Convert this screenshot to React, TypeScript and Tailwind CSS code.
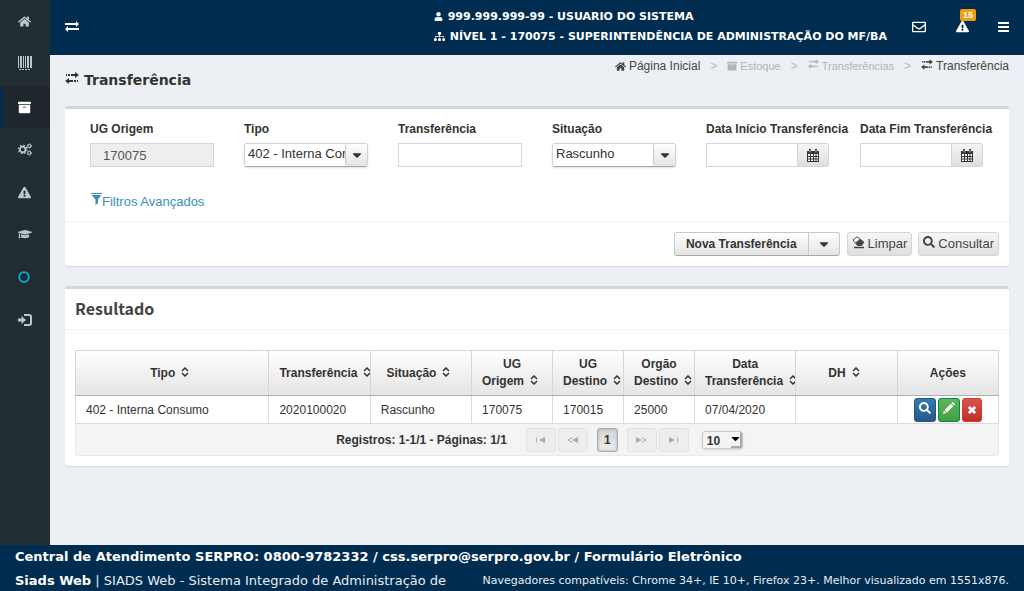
import type { ReactNode } from 'react';
import {
  FaArchive,
  FaCaretDown,
  FaExclamationTriangle,
  FaGraduationCap,
  FaHome,
  FaRegEnvelope,
  FaSearch,
  FaSitemap,
  FaUser,
} from 'react-icons/fa';

type IconProps = { className?: string };

function BarcodeIcon({ className }: IconProps) {
  return (
    <svg viewBox="0 0 14 14" className={className} fill="currentColor" aria-hidden="true">
      <path d="M0 0h1v12H0zM2 0h2v12H2zM5 0h1v12H5zM7 0h1v12H7zM9 0h2v12H9zM12 0h2v12h-2zM1 13h2v1H1zM4 13h2v1H4zM7 13h2v1H7zM10 13h2v1h-2z" />
    </svg>
  );
}

function CogsIcon({ className }: IconProps) {
  return (
    <svg viewBox="0 0 14 13" className={className} fill="none" stroke="currentColor" aria-hidden="true">
      <circle cx="4.700" cy="6.500" r="2.800" strokeWidth="1.800" />
      <circle cx="4.700" cy="6.500" r="4.200" strokeWidth="1.200" strokeDasharray="1.650 1.650" />
      <circle cx="11.300" cy="3" r="1.500" strokeWidth="1.100" />
      <circle cx="11.300" cy="3" r="2.300" strokeWidth=".8" strokeDasharray="1.200 1.200" />
      <circle cx="11.300" cy="10" r="1.500" strokeWidth="1.100" />
      <circle cx="11.300" cy="10" r="2.300" strokeWidth=".8" strokeDasharray="1.200 1.200" />
    </svg>
  );
}

function LoginIcon({ className }: IconProps) {
  return (
    <svg viewBox="0 0 14 12" className={className} fill="none" aria-hidden="true">
      <path d="M6 1h5q2 0 2 2v6q0 2-2 2H6" stroke="currentColor" strokeWidth="2" />
      <path d="M0 4.500h3.500V2L8 6 3.500 10V7.500H0z" fill="currentColor" />
    </svg>
  );
}

function SwapIcon({ className }: IconProps) {
  return (
    <svg viewBox="0 0 14 11" className={className} fill="currentColor" aria-hidden="true">
      <path d="M0 2h11V0l3 3-3 3V4H0zM14 7H3V5L0 8l3 3V9h11z" />
    </svg>
  );
}

function BarsIcon({ className }: IconProps) {
  return (
    <svg viewBox="0 0 11 10" className={className} fill="currentColor" aria-hidden="true">
      <path d="M0 0h11v2H0zM0 4h11v2H0zM0 8h11v2H0z" />
    </svg>
  );
}

function TransferIcon({ className }: IconProps) {
  return (
    <svg viewBox="0 0 14 12" className={className} fill="currentColor" aria-hidden="true">
      <path d="M1 2h1v2H1zM3 2h2v2H3zM6 2h4V0l4 3-4 3V4H6zM13 8h-1v2h1zM11 8H9v2h2zM8 8H4V6L0 9l4 3v-2h4z" />
    </svg>
  );
}

function FilterIcon({ className }: IconProps) {
  return (
    <svg viewBox="0 0 11 12" className={className} fill="currentColor" aria-hidden="true">
      <path d="M0 0h11v1H0zM.5 2h10L7 6.500V10l-2.500 2V6.500z" />
    </svg>
  );
}

function CalendarIcon({ className }: IconProps) {
  return (
    <svg viewBox="0 0 12 13" className={className} aria-hidden="true">
      <path d="M0 2h12v11H0z" fill="currentColor" />
      <path d="M1 5h2v2H1zM4 5h2v2H4zM7 5h1.500v2H7zM9.500 5H11v2H9.500zM1 8h2v1.500H1zM4 8h2v1.500H4zM7 8h1.500v1.500H7zM9.500 8H11v1.500H9.500zM1 10.500h2V12H1zM4 10.500h2V12H4zM7 10.500h1.500V12H7zM9.500 10.500H11V12H9.500z" fill="white" />
      <path d="M2 0h2v4H2zM8 0h2v4H8z" fill="currentColor" />
      <path d="M3 1v2.500M9 1v2.500" stroke="white" strokeWidth=".7" />
    </svg>
  );
}

function EraserIcon({ className }: IconProps) {
  return (
    <svg viewBox="0 0 13 13" className={className} aria-hidden="true">
      <path d="M1 4 5 .8 11.800 6 9 9.500H5.500z" fill="white" stroke="currentColor" />
      <path d="M3.500 6.500 8 3l4.200 3.500L9.500 10H6z" fill="currentColor" />
      <path d="M2 11.500h10" stroke="currentColor" strokeWidth="1.500" />
    </svg>
  );
}

function PencilIcon({ className }: IconProps) {
  return (
    <svg viewBox="0 0 13 13" className={className} fill="currentColor" aria-hidden="true">
      <path d="M0 13l1-3.500L3.500 12zM1.700 8.700 8.500 2 11 4.500 4.300 11.300zM9.300 1.300 10.500 0 13 2.500l-1.300 1.300z" />
    </svg>
  );
}

function RemoveIcon({ className }: IconProps) {
  return (
    <svg viewBox="0 0 9 9" className={className} fill="none" stroke="currentColor" strokeWidth="3" aria-hidden="true">
      <path d="M1 1l7 7M8 1 1 8" />
    </svg>
  );
}

function SortIcon() {
  return (
    <svg viewBox="0 0 8 10" className="mr-[5px] ml-[6px] inline-block h-[10px] w-2 align-baseline" fill="none" stroke="currentColor" strokeWidth="1.500" aria-hidden="true">
      <path d="M1 4l3-3 3 3M1 6l3 3 3-3" />
    </svg>
  );
}

function PagerIcon({ kind }: { kind: 'first' | 'prev' | 'next' | 'last' }) {
  const flipped = kind === 'next' || kind === 'last';
  const end = kind === 'first' || kind === 'last';
  return (
    <svg viewBox="0 0 11 6" className={flipped ? 'h-[6px] w-[11px] rotate-180' : 'h-[6px] w-[11px]'} aria-hidden="true">
      <path d={end ? 'M10 0v6L4 3z' : 'M11 0v6L5 3z'} fill="currentColor" />
      <path d={end ? 'M1.500 .5v5' : 'M5.500 .5 1 3l4.500 2.500'} fill="none" stroke="currentColor" />
    </svg>
  );
}

const menu = [
  { label: 'Início', size: 'h-[43px]', icon: <FaHome className="size-[13px]" /> },
  { label: 'Código de barras', size: 'h-[43px] pb-[3px]', icon: <BarcodeIcon className="size-[14px]" /> },
  { label: 'Estoque', size: 'h-[42px]', active: true, icon: <FaArchive className="size-[13px]" /> },
  { label: 'Configurações', size: 'h-[43px]', icon: <CogsIcon className="h-[13px] w-[14px]" /> },
  { label: 'Alertas', size: 'h-[42px]', icon: <FaExclamationTriangle className="size-[13px]" /> },
  { label: 'Treinamento', size: 'h-[42px]', icon: <FaGraduationCap className="size-[14px]" /> },
  {
    label: 'Status',
    size: 'h-[44px]',
    icon: (
      <svg viewBox="0 0 12 12" className="size-[12px] text-[#00b4e8]" aria-hidden="true">
        <circle cx="6" cy="6" r="4.800" fill="none" stroke="currentColor" strokeWidth="1.800" />
      </svg>
    ),
  },
  { label: 'Sair', size: 'h-[42px]', icon: <LoginIcon className="h-3 w-[14px]" /> },
];

function Sidebar() {
  return (
    <nav className="w-[50px] shrink-0 bg-[#222d32] text-[#b8c7ce]">
      {menu.map((m) => (
        <a
          key={m.label}
          href="#"
          aria-label={m.label}
          className={`flex items-center border-l-[3px] pl-[15px] ${m.size} ${
            m.active ? 'border-[#002c50] bg-[#1e282c] text-white' : 'border-transparent'
          }`}
        >
          {m.icon}
        </a>
      ))}
    </nav>
  );
}

function Header() {
  return (
    <header className="flex h-[55px] items-center bg-[#002c50] px-[15px] pb-[2px] text-white">
      <button aria-label="Alternar menu">
        <SwapIcon className="h-[11px] w-[14px]" />
      </button>
      <div className="ml-auto font-['DejaVu_Sans',sans-serif] text-[11px] leading-5 font-bold whitespace-nowrap">
        <p className="flex items-center gap-[5px]">
          <FaUser className="size-[9px]" />
          999.999.999-99 - USUARIO DO SISTEMA
        </p>
        <p className="flex items-center gap-[5px]">
          <FaSitemap className="size-[11px]" />
          NÍVEL 1 - 170075 - SUPERINTENDÊNCIA DE ADMINISTRAÇÃO DO MF/BA
        </p>
      </div>
      <button aria-label="Mensagens" className="ml-[25px]">
        <FaRegEnvelope className="size-[14px]" />
      </button>
      <button aria-label="Alertas" className="relative ml-[30px]">
        <FaExclamationTriangle className="size-[13px]" />
        <span className="absolute -top-[11px] left-1 rounded-[2px] bg-[#f39c12] px-[3px] text-[9px] leading-3 font-bold">15</span>
      </button>
      <button aria-label="Menu" className="ml-[29px]">
        <BarsIcon className="h-[10px] w-[11px]" />
      </button>
    </header>
  );
}

function Breadcrumb() {
  const sep = <span className="text-[#b8b8b8]">&gt;</span>;
  return (
    <nav aria-label="Trilha" className="flex items-center gap-[10px] text-[12px] leading-[22px] text-[#444]">
      <a href="#" className="flex items-center gap-[3px]">
        <FaHome className="size-[11px]" />
        Página Inicial
      </a>
      {sep}
      <span className="flex items-center gap-[3px] text-[11px] text-[#b3b3b3]">
        <FaArchive className="size-[10px]" />
        Estoque
      </span>
      {sep}
      <span className="flex items-center gap-[3px] text-[11px] text-[#b3b3b3]">
        <TransferIcon className="mb-1 h-[10px] w-[11px]" />
        Transferências
      </span>
      {sep}
      <a href="#" className="flex items-center gap-[3px]">
        <TransferIcon className="mb-1 h-[11px] w-3" />
        Transferência
      </a>
    </nav>
  );
}

function Field({ label, id, children }: { label: string; id: string; children: ReactNode }) {
  return (
    <div className="min-w-0 px-[15px]">
      <label htmlFor={id} className="block text-[12px] leading-[18px] font-bold whitespace-nowrap">
        {label}
      </label>
      <div className="mt-[5px]">{children}</div>
    </div>
  );
}

function Combo({ id, options }: { id: string; options: string[] }) {
  return (
    <div className="relative h-6 overflow-hidden rounded-[3px] border border-[#d3d3d3] border-b-[#a8a8a8] shadow-sm">
      <select id={id} className="block h-full w-full appearance-none bg-white pr-[21px] pb-[2px] pl-[3px] text-[13px]">
        {options.map((o) => (
          <option key={o}>{o}</option>
        ))}
      </select>
      <span className="pointer-events-none absolute inset-y-0 right-0 flex w-[22px] items-center justify-center rounded-l-[3px] border-l border-[#c8c8c8] bg-linear-to-b from-white to-[#e4e4e4]">
        <FaCaretDown className="size-[14px]" />
      </span>
    </div>
  );
}

function DateField({ id }: { id: string }) {
  return (
    <div className="flex h-6">
      <input id={id} className="w-[92px] min-w-0 border border-[#d2d6de] bg-white px-2 text-[13px]" />
      <button
        aria-label="Abrir calendário"
        className="flex w-[31px] items-center justify-center rounded-r-[3px] border border-l-0 border-[#d4d4d4] bg-linear-to-b from-[#f5f5f5] to-[#dfdfdf]"
      >
        <CalendarIcon className="h-[13px] w-3" />
      </button>
    </div>
  );
}

function Filters() {
  const action =
    'flex h-6 items-center gap-[3px] rounded-[3px] border border-[#d6d6d6] bg-linear-to-b from-[#f7f7f7] to-[#dfdfdf] px-1 text-[13px] text-[#444]';
  return (
    <section className="rounded-[3px] border-t-[3px] border-[#d2d6de] bg-white shadow-[0_1px_1px_rgba(0,0,0,0.1)]">
      <div className="grid grid-cols-6 px-[10px] pt-[11px]">
        <Field label="UG Origem" id="ug">
          <input id="ug" readOnly value="170075" className="block h-6 w-full border border-[#d2d6de] bg-[#eee] px-3 text-[13px] text-[#555]" />
        </Field>
        <Field label="Tipo" id="tipo">
          <Combo id="tipo" options={['402 - Interna Consumo']} />
        </Field>
        <Field label="Transferência" id="transferencia">
          <input id="transferencia" className="block h-6 w-full border border-[#d2d6de] px-3 text-[13px]" />
        </Field>
        <Field label="Situação" id="situacao">
          <Combo id="situacao" options={['Rascunho']} />
        </Field>
        <Field label="Data Início Transferência" id="inicio">
          <DateField id="inicio" />
        </Field>
        <Field label="Data Fim Transferência" id="fim">
          <DateField id="fim" />
        </Field>
      </div>
      <div className="border-b border-[#f4f4f4] px-[26px] pt-[21px] pb-[9px]">
        <a href="#" className="inline-flex items-center text-[13px] leading-[19px] text-[#3c8dbc]">
          <FilterIcon className="mb-1 h-3 w-[11px]" />
          Filtros Avançados
        </a>
      </div>
      <div className="flex items-center justify-end p-[10px]">
        <div className="flex h-6 rounded-[3px] border border-[#c8c8c8] border-b-[#a8a8a8] bg-linear-to-b from-white to-[#e4e4e4] text-[12px] font-bold">
          <button className="px-[11px]">Nova Transferência</button>
          <button aria-label="Mais opções" className="flex w-[31px] items-center justify-center border-l border-[#c8c8c8]">
            <FaCaretDown className="size-[14px]" />
          </button>
        </div>
        <button className={`ml-[7px] ${action}`}>
          <EraserIcon className="mb-1 size-[13px]" />
          Limpar
        </button>
        <button className={`ml-[6px] ${action}`}>
          <FaSearch className="mb-1 size-[12px]" />
          Consultar
        </button>
      </div>
    </section>
  );
}

const columns = [
  { lines: ['Tipo'], width: 'w-[21%]', value: '402 - Interna Consumo' },
  { lines: ['Transferência'], width: 'w-[11%]', value: '2020100020' },
  { lines: ['Situação'], width: 'w-[11%]', value: 'Rascunho' },
  { lines: ['UG', 'Origem'], width: 'w-[81px]', value: '170075' },
  { lines: ['UG', 'Destino'], width: 'w-[71px]', value: '170015' },
  { lines: ['Orgão', 'Destino'], width: 'w-[71px]', value: '25000' },
  { lines: ['Data', 'Transferência'], width: 'w-[11%]', value: '07/04/2020' },
  { lines: ['DH'], width: 'w-[11%]', value: '' },
];

function Results() {
  const pager = 'flex h-6 w-[30px] items-center justify-center rounded-[3px] border border-[#e2e2e2] bg-[#eee] text-[#aaa]';
  const rowButton = 'flex h-6 items-center justify-center rounded-[3px] border text-white';
  return (
    <section className="mt-5 rounded-[3px] border-t-[3px] border-[#d2d6de] bg-white shadow-[0_1px_1px_rgba(0,0,0,0.1)]">
      <h2 className="border-b border-[#f4f4f4] px-[10px] pt-[9px] pb-[11px] font-['Noto_Sans_CJK_JP',sans-serif] text-[16px] leading-5 font-bold text-[#444]">
        Resultado
      </h2>
      <div className="px-[10px] pt-5 pb-[10px] text-[12px]">
        <table className="w-full table-fixed border-collapse">
          <thead>
            <tr className="h-[45px] bg-linear-to-b from-white to-[#e4e4e4]">
              {columns.map((c) => (
                <th
                  key={c.lines.join(' ')}
                  className={`overflow-hidden border border-[#d6d6d6] border-b-[#b0b0b0] px-[10px] leading-[17px] whitespace-nowrap ${c.width}`}
                >
                  {c.lines.map((l, i) => (
                    <div key={l}>
                      {l}
                      {i === c.lines.length - 1 && <SortIcon />}
                    </div>
                  ))}
                </th>
              ))}
              <th className="w-[11%] border border-[#d6d6d6] border-b-[#b0b0b0]">Ações</th>
            </tr>
          </thead>
          <tbody>
            <tr className="h-7">
              {columns.map((c) => (
                <td key={c.lines.join(' ')} className="border border-[#dadada] px-[10px] whitespace-nowrap">
                  {c.value}
                </td>
              ))}
              <td className="border border-[#dadada]">
                <div className="flex justify-center gap-[2px]">
                  <button aria-label="Visualizar" className={`${rowButton} w-[22px] border-[#245580] bg-linear-to-b from-[#337ab7] to-[#265a88]`}>
                    <FaSearch className="mb-1 size-3" />
                  </button>
                  <button aria-label="Editar" className={`${rowButton} w-[22px] border-[#008d4c] bg-linear-to-b from-[#5cb85c] to-[#449d44]`}>
                    <PencilIcon className="mb-1 size-3" />
                  </button>
                  <button aria-label="Excluir" className={`${rowButton} w-5 border-[#d73925] bg-linear-to-b from-[#d9534f] to-[#c12e2a]`}>
                    <RemoveIcon className="size-2" />
                  </button>
                </div>
              </td>
            </tr>
          </tbody>
        </table>
        <div className="flex h-8 items-center justify-center rounded-b-[3px] border border-t-0 border-[#eaeaea] bg-[#f4f4f4] pl-[5px] font-bold">
          <span className="mr-[19px]">Registros: 1-1/1 - Páginas: 1/1</span>
          <button disabled aria-label="Primeira página" className={pager}>
            <PagerIcon kind="first" />
          </button>
          <button disabled aria-label="Página anterior" className={`ml-[2px] ${pager}`}>
            <PagerIcon kind="prev" />
          </button>
          <button className="mx-[9px] h-6 w-[21px] rounded-[3px] border border-[#aaa] bg-linear-to-b from-[#d4d4d4] to-[#ededed] shadow-[inset_0_0_3px_#aaa]">1</button>
          <button disabled aria-label="Próxima página" className={pager}>
            <PagerIcon kind="next" />
          </button>
          <button disabled aria-label="Última página" className={`ml-[2px] ${pager}`}>
            <PagerIcon kind="last" />
          </button>
          <div className="relative ml-[13px] h-[18px] w-[41px] overflow-hidden rounded-[3px] border border-[#ccc] bg-[#f4f4f4] shadow-sm">
            <select aria-label="Registros por página" className="block h-full w-full appearance-none pb-[2px] pl-1 font-bold">
              <option>10</option>
            </select>
            <span className="pointer-events-none absolute inset-y-0 right-0 flex w-[11px] items-center justify-center border-r-2 border-b-2 border-[#aaa]">
              <FaCaretDown className="size-[13px] shrink-0 text-black" />
            </span>
          </div>
        </div>
      </div>
    </section>
  );
}

export default function App() {
  return (
    <div className="flex h-screen flex-col bg-[#ecf0f5] font-['Liberation_Sans',Arial,sans-serif] text-[#333]">
      <div className="flex min-h-0 flex-1">
        <Sidebar />
        <div className="min-w-0 flex-1">
          <Header />
          <main className="px-[15px]">
            <div className="flex h-[51px] items-start justify-between">
              <h1 className="flex items-center gap-[5px] pt-[14px] font-['DejaVu_Sans',sans-serif] text-[14px] leading-[22px] font-bold">
                <TransferIcon className="mb-1 h-3 w-[14px]" />
                Transferência
              </h1>
              <Breadcrumb />
            </div>
            <Filters />
            <Results />
          </main>
        </div>
      </div>
      <footer className="h-[46px] shrink-0 overflow-hidden bg-[#002c50] px-[15px] font-['DejaVu_Sans',sans-serif] text-[13px] leading-6 text-[#e8edf2]">
        <p className="font-bold text-white">Central de Atendimento SERPRO: 0800-9782332 / css.serpro@serpro.gov.br / Formulário Eletrônico</p>
        <div className="flex justify-between">
          <p className="whitespace-nowrap">
            <strong className="text-white">Siads Web</strong> | SIADS Web - Sistema Integrado de Administração de
          </p>
          <p className="text-[11px] whitespace-nowrap">Navegadores compatíveis: Chrome 34+, IE 10+, Firefox 23+. Melhor visualizado em 1551x876.</p>
        </div>
      </footer>
    </div>
  );
}
